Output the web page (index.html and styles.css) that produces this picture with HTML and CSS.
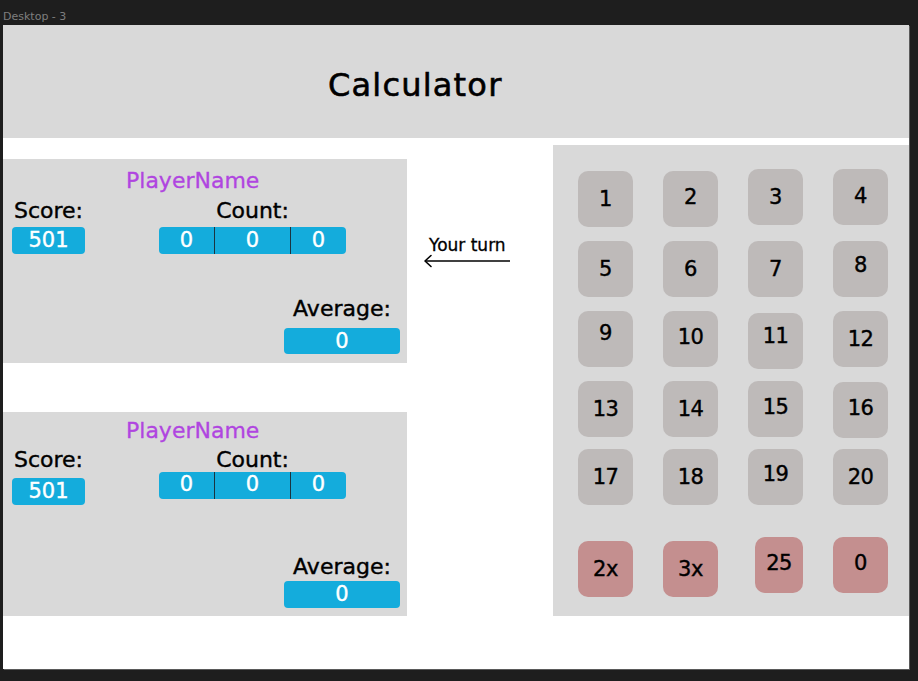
FILE: index.html
```html
<!DOCTYPE html>
<html lang="en">
<head>
<meta charset="utf-8">
<title>Calculator</title>
<link rel="stylesheet" href="styles.css">
</head>
<body>
<div class="frame-label">Desktop - 3</div>
<div class="frame">
  <header class="header"><h1 class="title">Calculator</h1></header>
  <main class="main">
    <div class="players">
      <section class="card card--first">
        <div class="name">PlayerName</div>
        <div class="stats">
          <div class="col col--score">
            <div class="label">Score:</div>
            <div class="pill pill--score">501</div>
          </div>
          <div class="col col--count">
            <div class="label">Count:</div>
            <div class="pill pill--count"><span>0</span><span>0</span><span>0</span></div>
          </div>
        </div>
        <div class="col col--avg">
          <div class="label">Average:</div>
          <div class="pill pill--avg">0</div>
        </div>
      </section>
      <section class="card card--second">
        <div class="name">PlayerName</div>
        <div class="stats">
          <div class="col col--score">
            <div class="label">Score:</div>
            <div class="pill pill--score">501</div>
          </div>
          <div class="col col--count">
            <div class="label">Count:</div>
            <div class="pill pill--count"><span>0</span><span>0</span><span>0</span></div>
          </div>
        </div>
        <div class="col col--avg">
          <div class="label">Average:</div>
          <div class="pill pill--avg">0</div>
        </div>
      </section>
    </div>
    <div class="turn">
      <div class="turn-text">Your turn</div>
      <svg class="arrow" width="90" height="14" viewBox="0 0 90 14">
        <line x1="2" y1="7" x2="87" y2="7" stroke="#000" stroke-width="1.6"/>
        <polyline points="8,1.5 2,7 8,12.5" fill="none" stroke="#000" stroke-width="1.6" stroke-linecap="round" stroke-linejoin="round"/>
      </svg>
    </div>
    <section class="keypad">
      <div class="keys">
        <div class="key">1</div>
        <div class="key t5">2</div>
        <div class="key u2">3</div>
        <div class="key u2 t3">4</div>
        <div class="key">5</div>
        <div class="key">6</div>
        <div class="key">7</div>
        <div class="key t8">8</div>
        <div class="key t12">9</div>
        <div class="key t5">10</div>
        <div class="key d2 t10">11</div>
        <div class="key">12</div>
        <div class="key">13</div>
        <div class="key">14</div>
        <div class="key t5">15</div>
        <div class="key d1 t5">16</div>
        <div class="key u2">17</div>
        <div class="key u2">18</div>
        <div class="key u2 t6">19</div>
        <div class="key u2">20</div>
      </div>
      <div class="keys keys--special">
        <div class="key key--red d4">2x</div>
        <div class="key key--red d4">3x</div>
        <div class="key key--red shift t4">25</div>
        <div class="key key--red t4">0</div>
      </div>
    </section>
  </main>
</div>
</body>
</html>
```
FILE: styles.css
```css
* { box-sizing: border-box; }

html, body {
  margin: 0;
  padding: 0;
}

body {
  background: #1e1e1e;
  width: 918px;
  height: 681px;
  overflow: hidden;
  font-family: "DejaVu Sans", "Liberation Sans", sans-serif;
  color: #000;
}

.frame-label {
  height: 25px;
  padding: 10px 0 0 3px;
  font-size: 11px;
  line-height: 14px;
  color: #7e7e7e;
}

.frame {
  margin-left: 3px;
  width: 906px;
  height: 644px;
  background: #fff;
  box-shadow: 1px 1px 0 #5a5a5a;
  display: flex;
  flex-direction: column;
}

.header {
  height: 113px;
  background: #d9d9d9;
  padding: 40px 0 0 325px;
}

.title {
  margin: 0;
  font-size: 32px;
  line-height: 40px;
  font-weight: normal;
  letter-spacing: 1.2px;
  -webkit-text-stroke: 0.6px #000;
}

.main {
  flex: 1;
  display: flex;
}

.players {
  width: 404px;
  padding-top: 21px;
  display: flex;
  flex-direction: column;
}

.card {
  height: 204px;
  background: #d9d9d9;
  display: flex;
  flex-direction: column;
}

.card--first { padding: 10px 0 9px 0; }
.card--second { margin-top: 49px; padding: 7px 0 8px 0; }

.name {
  padding-left: 123px;
  font-size: 22px;
  line-height: 24px;
  color: #b045e0;
  -webkit-text-stroke: 0.3px #b045e0;
}

.label {
  font-size: 22px;
  line-height: 24px;
  white-space: nowrap;
  -webkit-text-stroke: 0.4px #000;
}

.stats {
  display: flex;
  align-items: flex-start;
  padding-left: 9px;
  margin-top: 6px;
  gap: 74px;
}

.card--second .stats { margin-top: 5px; }

.col {
  display: flex;
  flex-direction: column;
  align-items: center;
}

.col--score { width: 73px; }
.col--count { width: 187px; }

.pill {
  background: #14acdc;
  color: #fff;
  border-radius: 4px;
  font-size: 21px;
  text-align: center;
  width: 100%;
  -webkit-text-stroke: 0.4px #fff;
}

.pill--score {
  height: 27px;
  line-height: 27px;
  margin-top: 4px;
}

.card--second .pill--score { margin-top: 6px; }

.pill--count {
  height: 27px;
  line-height: 27px;
  margin-top: 4px;
  display: flex;
}

.card--second .pill--count { margin-top: 0; line-height: 25px; }

.pill--count span { display: block; }
.pill--count span:nth-child(1) { width: 55px; }
.pill--count span:nth-child(2) { width: 76px; border-left: 1px solid #1b3440; }
.pill--count span:nth-child(3) { width: 56px; border-left: 1px solid #1b3440; }

.col--avg {
  margin-top: auto;
  align-self: flex-end;
  margin-right: 7px;
  width: 116px;
}

.pill--avg {
  height: 26px;
  line-height: 26px;
  margin-top: 7px;
}

.card--second .pill--avg { margin-top: 2px; height: 27px; line-height: 27px; }

.turn {
  width: 146px;
  padding-top: 97px;
}

.turn-text {
  padding-left: 22px;
  font-size: 17px;
  line-height: 20px;
  -webkit-text-stroke: 0.3px #000;
}

.arrow {
  display: block;
  margin-left: 16px;
  margin-top: -1px;
}

.keypad {
  width: 356px;
  height: 471px;
  margin-top: 7px;
  background: #d9d9d9;
  padding: 26px 0 0 25px;
}

.keys {
  display: grid;
  grid-template-columns: repeat(4, 55px);
  grid-auto-rows: 56px;
  column-gap: 30px;
  row-gap: 14px;
  align-items: start;
}

.keys--special {
  margin-top: 30px;
}

.key {
  height: 56px;
  background: #bebab9;
  border-radius: 10px;
  display: flex;
  align-items: center;
  justify-content: center;
  font-size: 21px;
  letter-spacing: -0.5px;
  -webkit-text-stroke: 0.4px #000;
}

.key--red { background: #c48f8f; }

.u2 { margin-top: -2px; }
.d1 { margin-top: 1px; }
.d2 { margin-top: 2px; }
.d4 { margin-top: 4px; }
.shift { margin-left: 7px; }

.t3 { padding-bottom: 3px; }
.t4 { padding-bottom: 4px; }
.t5 { padding-bottom: 5px; }
.t6 { padding-bottom: 6px; }
.t8 { padding-bottom: 8px; }
.t10 { padding-bottom: 10px; }
.t12 { padding-bottom: 12px; }
```
